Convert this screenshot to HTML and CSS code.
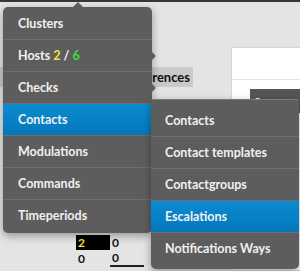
FILE: index.html
```html
<!DOCTYPE html>
<html lang="en">
<head>
  <meta charset="UTF-8" />
  <title>Configuration menu</title>
  <link rel="stylesheet" href="styles.css">
</head>
<body>
  <div class="topbar"></div>

  <div class="page">
    <div class="left-col">
      <div class="pref-label">Global preferences</div>
      <table class="counts">
        <tr><td class="hl">2</td><td>0</td></tr>
        <tr><td>0</td><td>0</td></tr>
      </table>
    </div>
    <div class="panel">
      <div class="panel-head"></div>
      <div class="panel-body">
        <span class="save-btn">Save</span>
      </div>
    </div>
  </div>

  <ul class="menu">
    <li>Clusters</li>
    <li class="has-sub">Hosts <span class="warn">2</span> / <span class="ok">6</span></li>
    <li class="has-sub">Checks</li>
    <li class="active">Contacts</li>
    <li>Modulations</li>
    <li>Commands</li>
    <li>Timeperiods</li>
  </ul>

  <ul class="submenu">
    <li>Contacts</li>
    <li>Contact templates</li>
    <li>Contactgroups</li>
    <li class="active">Escalations</li>
    <li>Notifications Ways</li>
  </ul>
</body>
</html>
```

FILE: styles.css
```css
body {
  margin: 0;
  padding: 0;
  width: 300px;
  height: 271px;
  overflow: hidden;
  position: relative;
  background: #e4e4e4;
  font-family: Lato, "Open Sans", sans-serif;
}
.topbar {
  height: 2px;
  background: #363636;
}
.page {
  display: flex;
  height: 269px;
}
.left-col {
  width: 231px;
}
.pref-label {
  margin-top: 65px;
  width: 190px;
  height: 20px;
  line-height: 20px;
  padding-right: 3px;
  background: #cacaca;
  text-align: right;
  font-size: 13px;
  font-weight: bold;
  color: #111;
}
.counts {
  margin: 148px 0 0 76px;
  border-collapse: collapse;
  font-size: 12px;
  font-weight: bold;
  color: #111;
}
.counts td {
  width: 32px;
  height: 15px;
  padding: 0 0 0 2px;
}
.counts td.hl {
  background: #000;
  color: #f2e63a;
}
.counts tr:last-child td:last-child {
  border-bottom: 2px solid #222;
}
.panel {
  flex: 1;
  margin-top: 45px;
  background: #fff;
  border: 1px solid #d6d6d6;
  border-right: none;
}
.panel-head {
  height: 31px;
  border-bottom: 1px solid #e2e2e2;
}
.panel-body {
  padding: 9px 0 0 18px;
}
.save-btn {
  display: block;
  height: 24px;
  line-height: 25px;
  background: #555;
  color: #fff;
  font-size: 12px;
  font-weight: bold;
  padding: 0 4px;
}
.menu, .submenu {
  position: absolute;
  list-style: none;
  margin: 0;
  background: #5d5d5d;
  box-shadow: 0 3px 8px rgba(0,0,0,0.35);
}
.menu {
  left: 3px;
  top: 7px;
  width: 149px;
  padding: 1px 0 2px;
  border-radius: 5px;
}
.menu::before {
  content: "";
  position: absolute;
  top: -5px;
  left: 70px;
  border-left: 5px solid transparent;
  border-right: 5px solid transparent;
  border-bottom: 5px solid #5d5d5d;
}
.submenu {
  left: 151px;
  top: 99px;
  width: 148px;
  padding: 5px 0 5px;
  border-top: 1px solid #7a7a7a;
  border-radius: 2px 2px 5px 5px;
}
.menu li, .submenu li {
  position: relative;
  height: 31px;
  line-height: 31px;
  border-bottom: 1px solid #6e6e6e;
  padding-left: 15px;
  color: #f1f1f1;
  font-size: 12.5px;
  font-weight: bold;
}
.submenu li {
  padding-left: 14px;
}
.menu li:last-child, .submenu li:last-child {
  border-bottom: none;
}
.menu li.active, .submenu li.active {
  background: linear-gradient(#0b8bd1, #0478bb);
}
.menu li.has-sub::after {
  content: "";
  position: absolute;
  right: -4px;
  top: 12px;
  border-top: 4px solid transparent;
  border-bottom: 4px solid transparent;
  border-left: 4px solid #5d5d5d;
}
.warn {
  color: #f0e23c;
}
.ok {
  color: #3be03b;
}
```
